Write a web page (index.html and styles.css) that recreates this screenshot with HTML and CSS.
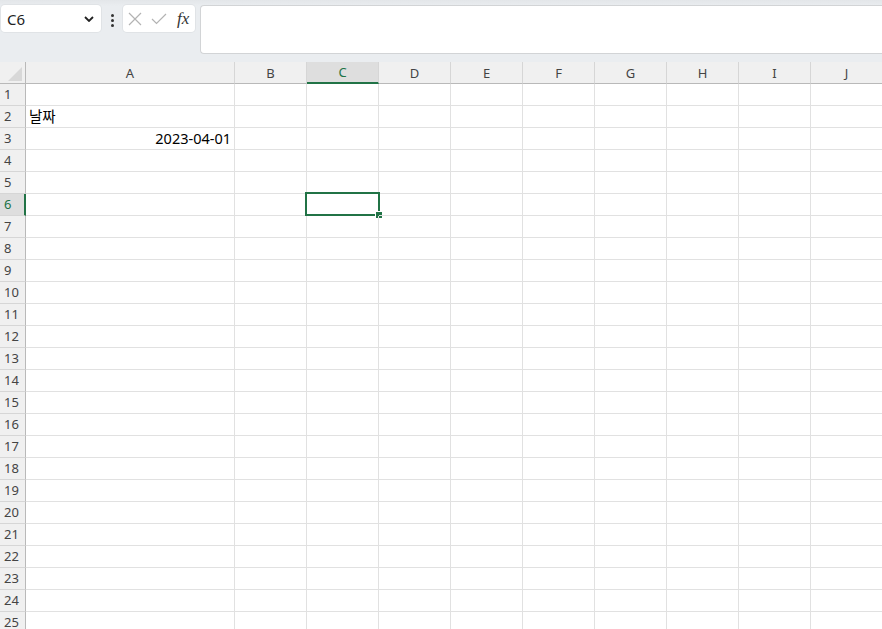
FILE: index.html
```html
<!DOCTYPE html>
<html>
<head>
    <link rel="stylesheet" href="styles.css">
</head>
<body>
    <div class="toolbar">
        <div class="namebox">
            <span>C6</span>
            <svg class="chevron" width="10" height="6" viewBox="0 0 10 6"><path d="M1 1l4 4 4-4" fill="none" stroke="#222" stroke-width="1.8"/></svg>
        </div>
        <div class="dots"><i></i><i></i><i></i></div>
        <div class="fxbox">
            <svg width="14" height="14" viewBox="0 0 14 14"><path d="M1 1l12 12M13 1L1 13" stroke="#b3b3b3" stroke-width="1.2"/></svg>
            <svg width="16" height="12" viewBox="0 0 16 12"><path d="M1 6l4.5 4.5L15 1" fill="none" stroke="#b3b3b3" stroke-width="1.2"/></svg>
            <span class="fx">fx</span>
        </div>
        <div class="formula"></div>
    </div>

    <div class="sheet">
        <div class="row head">
            <span class="rh corner"><em></em></span>
            <span class="c a">A</span><span class="c">B</span><span class="c sel">C</span><span class="c">D</span><span class="c">E</span><span class="c">F</span><span class="c">G</span><span class="c">H</span><span class="c">I</span><span class="c">J</span>
        </div>
        <div class="row"><span class="rh">1</span><span class="c a"></span><span class="c"></span><span class="c"></span><span class="c"></span><span class="c"></span><span class="c"></span><span class="c"></span><span class="c"></span><span class="c"></span><span class="c"></span></div>
        <div class="row"><span class="rh">2</span><span class="c a">날짜</span><span class="c"></span><span class="c"></span><span class="c"></span><span class="c"></span><span class="c"></span><span class="c"></span><span class="c"></span><span class="c"></span><span class="c"></span></div>
        <div class="row"><span class="rh">3</span><span class="c a num">2023-04-01</span><span class="c"></span><span class="c"></span><span class="c"></span><span class="c"></span><span class="c"></span><span class="c"></span><span class="c"></span><span class="c"></span><span class="c"></span></div>
        <div class="row"><span class="rh">4</span><span class="c a"></span><span class="c"></span><span class="c"></span><span class="c"></span><span class="c"></span><span class="c"></span><span class="c"></span><span class="c"></span><span class="c"></span><span class="c"></span></div>
        <div class="row"><span class="rh">5</span><span class="c a"></span><span class="c"></span><span class="c"></span><span class="c"></span><span class="c"></span><span class="c"></span><span class="c"></span><span class="c"></span><span class="c"></span><span class="c"></span></div>
        <div class="row"><span class="rh sel">6</span><span class="c a"></span><span class="c"></span><span class="c active"><b class="box"><b class="handle"></b></b></span><span class="c"></span><span class="c"></span><span class="c"></span><span class="c"></span><span class="c"></span><span class="c"></span><span class="c"></span></div>
        <div class="row"><span class="rh">7</span><span class="c a"></span><span class="c"></span><span class="c"></span><span class="c"></span><span class="c"></span><span class="c"></span><span class="c"></span><span class="c"></span><span class="c"></span><span class="c"></span></div>
        <div class="row"><span class="rh">8</span><span class="c a"></span><span class="c"></span><span class="c"></span><span class="c"></span><span class="c"></span><span class="c"></span><span class="c"></span><span class="c"></span><span class="c"></span><span class="c"></span></div>
        <div class="row"><span class="rh">9</span><span class="c a"></span><span class="c"></span><span class="c"></span><span class="c"></span><span class="c"></span><span class="c"></span><span class="c"></span><span class="c"></span><span class="c"></span><span class="c"></span></div>
        <div class="row"><span class="rh">10</span><span class="c a"></span><span class="c"></span><span class="c"></span><span class="c"></span><span class="c"></span><span class="c"></span><span class="c"></span><span class="c"></span><span class="c"></span><span class="c"></span></div>
        <div class="row"><span class="rh">11</span><span class="c a"></span><span class="c"></span><span class="c"></span><span class="c"></span><span class="c"></span><span class="c"></span><span class="c"></span><span class="c"></span><span class="c"></span><span class="c"></span></div>
        <div class="row"><span class="rh">12</span><span class="c a"></span><span class="c"></span><span class="c"></span><span class="c"></span><span class="c"></span><span class="c"></span><span class="c"></span><span class="c"></span><span class="c"></span><span class="c"></span></div>
        <div class="row"><span class="rh">13</span><span class="c a"></span><span class="c"></span><span class="c"></span><span class="c"></span><span class="c"></span><span class="c"></span><span class="c"></span><span class="c"></span><span class="c"></span><span class="c"></span></div>
        <div class="row"><span class="rh">14</span><span class="c a"></span><span class="c"></span><span class="c"></span><span class="c"></span><span class="c"></span><span class="c"></span><span class="c"></span><span class="c"></span><span class="c"></span><span class="c"></span></div>
        <div class="row"><span class="rh">15</span><span class="c a"></span><span class="c"></span><span class="c"></span><span class="c"></span><span class="c"></span><span class="c"></span><span class="c"></span><span class="c"></span><span class="c"></span><span class="c"></span></div>
        <div class="row"><span class="rh">16</span><span class="c a"></span><span class="c"></span><span class="c"></span><span class="c"></span><span class="c"></span><span class="c"></span><span class="c"></span><span class="c"></span><span class="c"></span><span class="c"></span></div>
        <div class="row"><span class="rh">17</span><span class="c a"></span><span class="c"></span><span class="c"></span><span class="c"></span><span class="c"></span><span class="c"></span><span class="c"></span><span class="c"></span><span class="c"></span><span class="c"></span></div>
        <div class="row"><span class="rh">18</span><span class="c a"></span><span class="c"></span><span class="c"></span><span class="c"></span><span class="c"></span><span class="c"></span><span class="c"></span><span class="c"></span><span class="c"></span><span class="c"></span></div>
        <div class="row"><span class="rh">19</span><span class="c a"></span><span class="c"></span><span class="c"></span><span class="c"></span><span class="c"></span><span class="c"></span><span class="c"></span><span class="c"></span><span class="c"></span><span class="c"></span></div>
        <div class="row"><span class="rh">20</span><span class="c a"></span><span class="c"></span><span class="c"></span><span class="c"></span><span class="c"></span><span class="c"></span><span class="c"></span><span class="c"></span><span class="c"></span><span class="c"></span></div>
        <div class="row"><span class="rh">21</span><span class="c a"></span><span class="c"></span><span class="c"></span><span class="c"></span><span class="c"></span><span class="c"></span><span class="c"></span><span class="c"></span><span class="c"></span><span class="c"></span></div>
        <div class="row"><span class="rh">22</span><span class="c a"></span><span class="c"></span><span class="c"></span><span class="c"></span><span class="c"></span><span class="c"></span><span class="c"></span><span class="c"></span><span class="c"></span><span class="c"></span></div>
        <div class="row"><span class="rh">23</span><span class="c a"></span><span class="c"></span><span class="c"></span><span class="c"></span><span class="c"></span><span class="c"></span><span class="c"></span><span class="c"></span><span class="c"></span><span class="c"></span></div>
        <div class="row"><span class="rh">24</span><span class="c a"></span><span class="c"></span><span class="c"></span><span class="c"></span><span class="c"></span><span class="c"></span><span class="c"></span><span class="c"></span><span class="c"></span><span class="c"></span></div>
        <div class="row"><span class="rh">25</span><span class="c a"></span><span class="c"></span><span class="c"></span><span class="c"></span><span class="c"></span><span class="c"></span><span class="c"></span><span class="c"></span><span class="c"></span><span class="c"></span></div>
    </div>
</body>
</html>
```

FILE: styles.css
```css
* {
    box-sizing: border-box;
}

body {
    margin: 0;
    overflow: hidden;
    background-color: white;
    color: black;
    font-family: "Noto Sans", "Noto Sans CJK KR", sans-serif;
}

/* formula bar */
.toolbar {
    display: flex;
    align-items: flex-start;
    height: 62px;
    padding: 5px 0 0 1px;
    background: linear-gradient(#e3e6e9, #eaedf0 6px, #eaedf0);
}

.namebox {
    display: flex;
    align-items: center;
    justify-content: space-between;
    width: 100px;
    height: 27px;
    padding: 0 7px 0 6px;
    background-color: white;
    border-radius: 4px;
    box-shadow: 0 0 0 1px #e0e3e6;
    font-size: 15px;
    color: #222;
}

.dots {
    display: flex;
    flex-direction: column;
    align-items: center;
    gap: 2px;
    width: 22px;
    padding-top: 9px;
}

.dots i {
    width: 3px;
    height: 3px;
    background-color: #333;
    border-radius: 50%;
}

.fxbox {
    display: flex;
    align-items: center;
    gap: 9px;
    width: 72px;
    height: 27px;
    padding-left: 5px;
    background-color: white;
    border-radius: 4px;
    box-shadow: 0 0 0 1px #e0e3e6;
}

.fx {
    font-family: "Liberation Serif", serif;
    font-style: italic;
    font-size: 17px;
    color: #333;
    margin-left: 1px;
}

.formula {
    flex: 1;
    height: 49px;
    margin-left: 5px;
    background-color: white;
    border: 1px solid #d2d4d6;
    border-right: none;
    border-radius: 4px 0 0 4px;
}

/* grid */
.row {
    display: flex;
    height: 22px;
}

.rh, .c {
    display: flex;
    align-items: center;
    height: 22px;
    flex-shrink: 0;
}

.rh {
    width: 26px;
    padding: 0 0 1px 4px;
    background-color: #f0f0f0;
    border-right: 1px solid #b9b9b9;
    border-bottom: 1px solid #d6d6d6;
    font-size: 13px;
    color: #444;
}

.rh.sel {
    background-color: #dedede;
    border-right: 2px solid #217346;
    color: #217346;
}

.c {
    position: relative;
    width: 72px;
    padding: 0 3px 2px;
    border-right: 1px solid #e1e1e1;
    border-bottom: 1px solid #e1e1e1;
    font-size: 14.5px;
}

.c.a {
    width: 209px;
}

.num {
    justify-content: flex-end;
}

.head .c {
    justify-content: center;
    padding-bottom: 0;
    background-color: #f0f0f0;
    border-right-color: #d6d6d6;
    border-bottom-color: #b9b9b9;
    font-size: 13px;
    color: #444;
}

.head .rh {
    border-bottom-color: #b9b9b9;
}

.head .c.sel {
    background-color: #dedede;
    border-bottom: 2px solid #217346;
    color: #217346;
}

.corner em {
    width: 0;
    height: 0;
    margin: 4px 0 0 4px;
    border-left: 14px solid transparent;
    border-bottom: 14px solid #d8d8d8;
}

.box {
    position: absolute;
    left: -2px;
    top: -2px;
    width: 75px;
    height: 24px;
    border: 2px solid #217346;
}

.handle {
    position: absolute;
    left: 68px;
    top: 17px;
    width: 8px;
    height: 8px;
    background-color: #217346;
    border: 1px solid white;
}
```
